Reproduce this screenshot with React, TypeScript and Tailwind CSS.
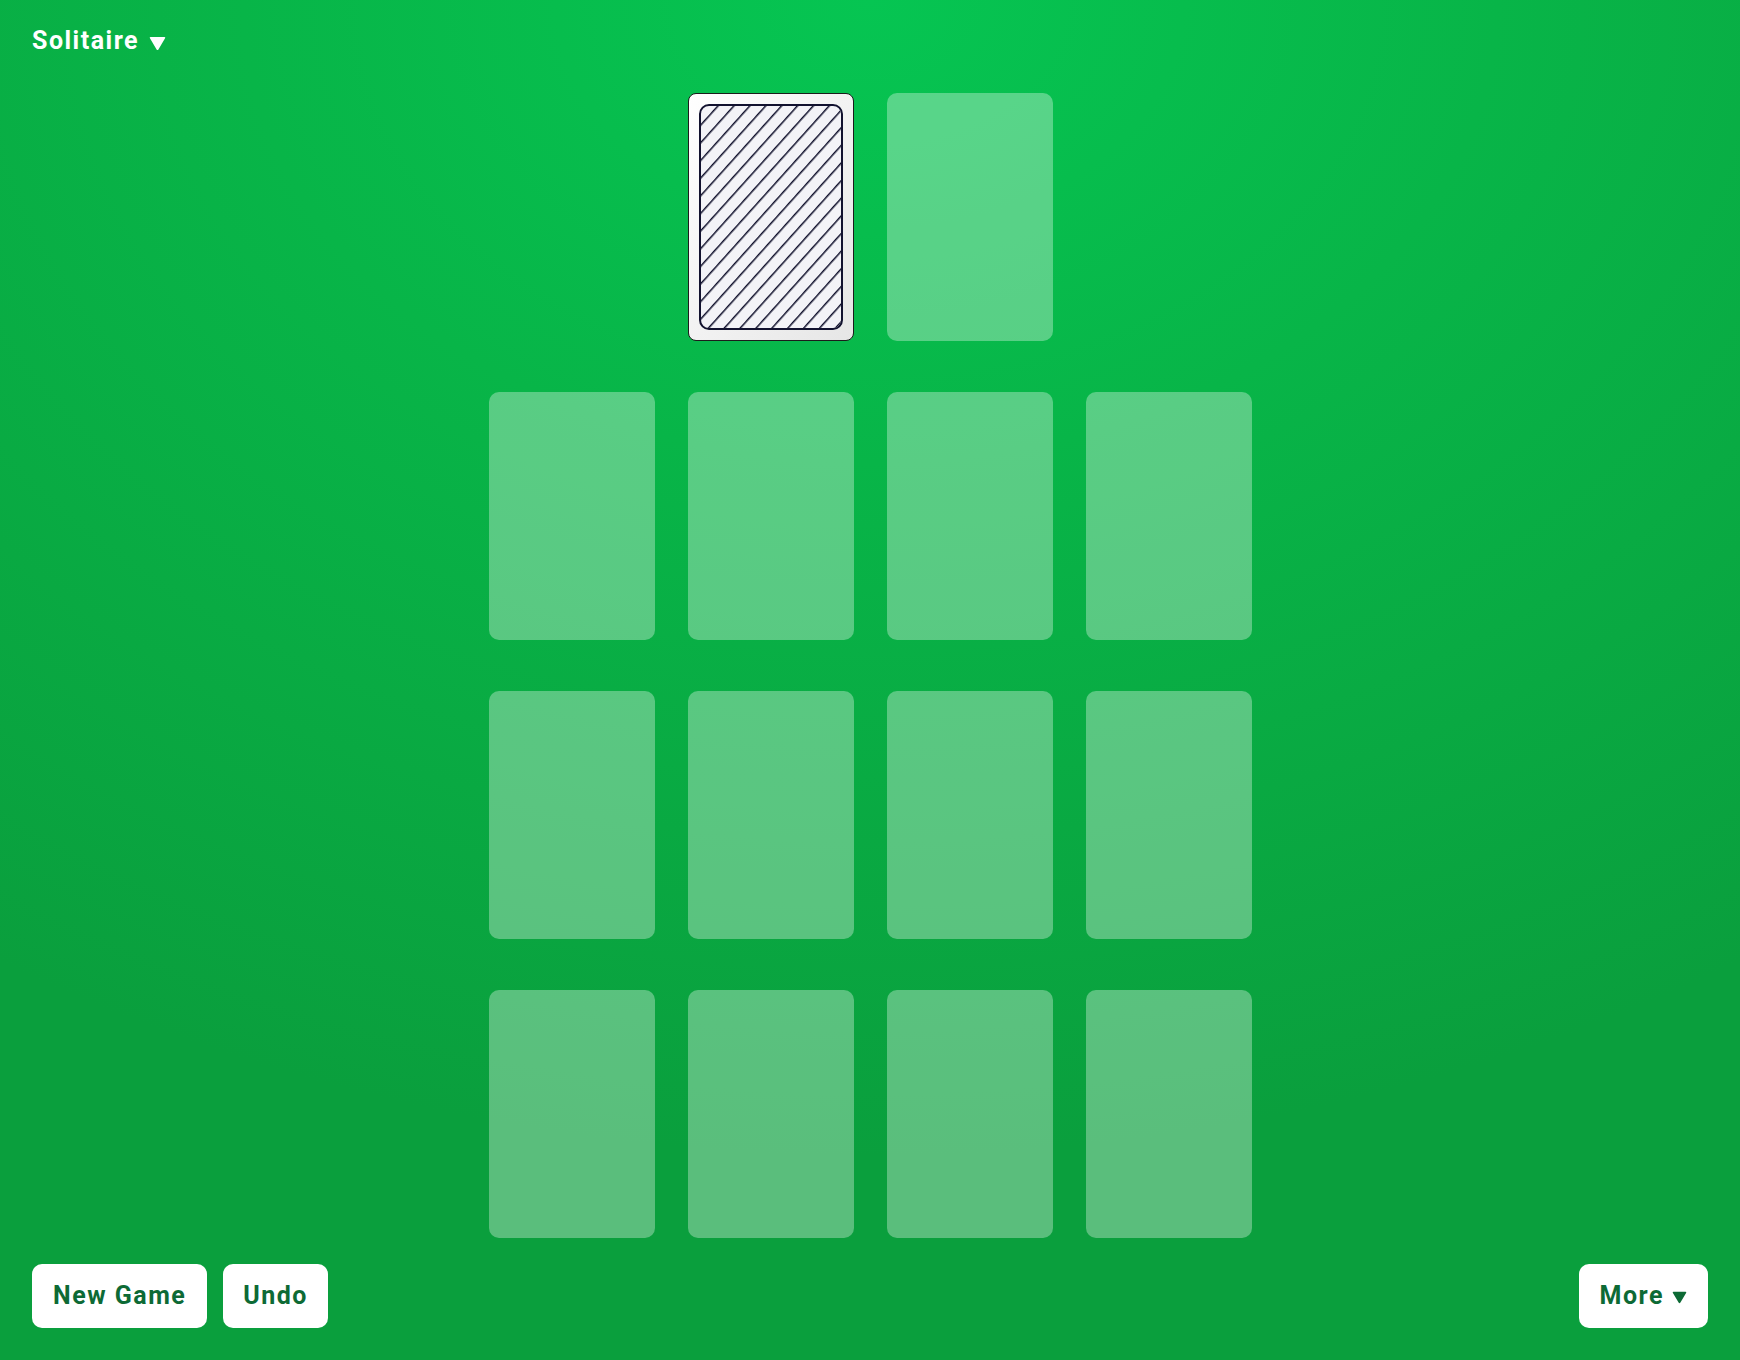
import React from "react";

function Tri({ className }: { className?: string }) {
  return (
    <svg viewBox="0 0 16 14" className={className} aria-hidden>
      <path d="M1.6 0.8 L14.4 0.8 Q15.9 0.8 15.1 2.1 L9 12.4 Q8 14 7 12.4 L0.9 2.1 Q0.1 0.8 1.6 0.8 Z" fill="currentColor" />
    </svg>
  );
}

function Slot() {
  return <div className="h-[248px] w-[166px] rounded-[10px] bg-white/[0.33]" />;
}

function CardBack() {
  return (
    <div className="h-[248px] w-[166px] rounded-[8px] border-[1.5px] border-[#1c1c1c] bg-gradient-to-br from-[#ffffff] to-[#e6e6e6] p-[10px]">
      <div className="h-full w-full overflow-hidden rounded-[10px] border-2 border-[#12122f] bg-[#f3f3f7]">
        <svg width="100%" height="100%" aria-hidden>
          <defs>
            <pattern id="stripes" width="11.8" height="11.8" patternUnits="userSpaceOnUse" patternTransform="rotate(42)">
              <line x1="0" y1="0" x2="0" y2="11.8" stroke="#0e0e2a" strokeWidth="3" />
            </pattern>
          </defs>
          <rect width="100%" height="100%" fill="url(#stripes)" />
        </svg>
      </div>
    </div>
  );
}

export default function App() {
  const font = { fontFamily: "Roboto, 'Noto Sans', sans-serif" };
  return (
    <div
      className="flex h-[1360px] w-full flex-col bg-[radial-gradient(ellipse_90%_85%_at_50%_0%,#06c552_0%,#08b548_40%,#0a9f3d_100%)]"
      style={font}
    >
      <div className="flex h-[93px] items-start pl-8 pt-[25px]">
        <div className="flex items-center gap-[10px] text-[25px] font-bold leading-[32px] tracking-[0.06em] text-white">
          <span>Solitaire</span>
          <Tri className="mt-[4px] h-[15px] w-[17px]" />
        </div>
      </div>

      <div className="mx-auto grid grid-cols-[repeat(4,166px)] gap-x-[33px] gap-y-[51px]">
        <div />
        <CardBack />
        <Slot />
        <div />
        {Array.from({ length: 12 }).map((_, i) => (
          <Slot key={i} />
        ))}
      </div>

      <div className="flex-1" />

      <div className="flex items-center justify-between px-8 pb-8">
        <div className="flex gap-4">
          <button className="h-16 rounded-[10px] bg-white px-[21px] text-[25px] font-bold tracking-[0.06em] text-[#0d6a35]">
            New Game
          </button>
          <button className="h-16 rounded-[10px] bg-white px-[20px] text-[25px] font-bold tracking-[0.06em] text-[#0d6a35]">
            Undo
          </button>
        </div>
        <button className="flex h-16 items-center gap-[8px] rounded-[10px] bg-white px-[21px] text-[25px] font-bold tracking-[0.06em] text-[#0d6a35]">
          <span>More</span>
          <Tri className="mt-[3px] h-[13px] w-[15px]" />
        </button>
      </div>
    </div>
  );
}
